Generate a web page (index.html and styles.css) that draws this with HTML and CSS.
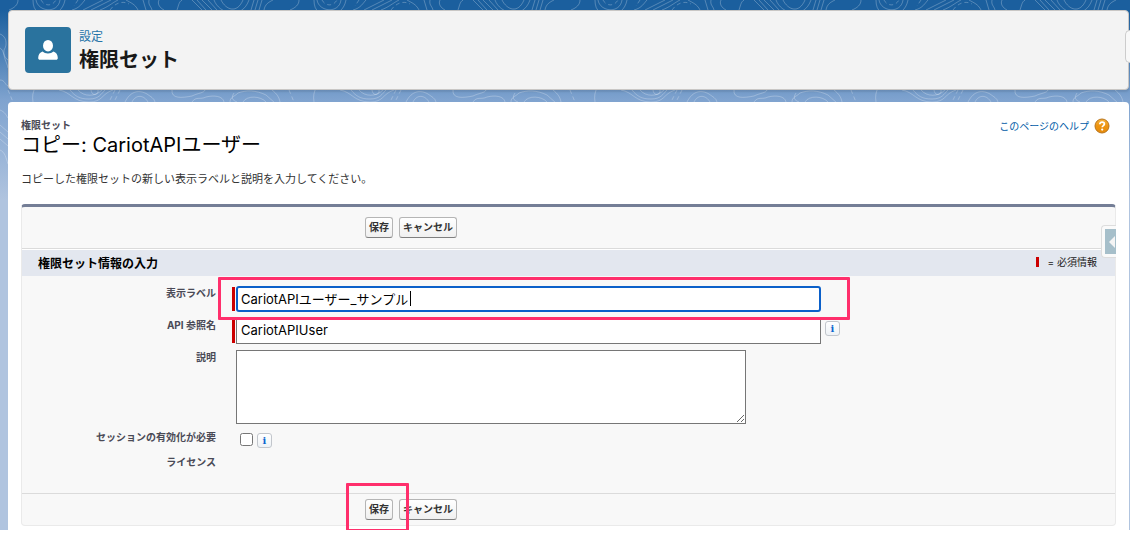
FILE: index.html
```html
<!DOCTYPE html>
<html lang="ja">
<head>
  <meta charset="UTF-8" />
  <meta name="viewport" content="width=device-width, initial-scale=1.0" />
  <title>権限セット</title>
  <link rel="stylesheet" href="styles.css">
</head>
<body>
  <div class="page">
    <svg class="contours" aria-hidden="true">
      <defs>
        <pattern id="topo" width="281" height="200" patternUnits="userSpaceOnUse" x="300">
          <g fill="none" stroke="#fff" stroke-opacity="0.25">
            <path d="M14 0c0 12 6 14 18 16M17 0c2 12 22 14 24 0M46 0c-1 5-3 8-5 10M53 10c8-2 10-7 13-10M64 10l20-10M72 10L92 0M81 10c8-3 12-7 18-10M107 0c5 3 9 4 12 10M124 0l3 10M130 0c-1 5 2 6 3 10M140 0c-2 4 1 8 5 10M158 10c2-6 2-8 5-10M173 0l10 10M178 0l9 10M183 0l10 10M189 0l9 10M202 0c5 10 16 14 22 0M195 0c5 14 28 20 35 0M235 0l-3 10M239 0l-3 10M243 0l-3 10M245 10c1-6 5-8 9-10M280 0c0 5-4 8-9 10" />
            <path d="M22 0c3 6 11 7 15 0M59 0l-4 6M91 10c4-6 12-10 19-6" stroke-dasharray="4 3" />
            <path d="M14 102c-1-6 0-10 2-14M40 90c12 2 14 12 30 12 14 0 12-8 24-12M51 90c5 6 9 9 19 9 10 0 12-5 16-9M59 90c6 7 17 7 24 0M72 90c1 7 8 5 7 0M106 102c6-12 15-12 22-8 4 3 7 4 8 8M113 102c4-8 12-7 16 0M153 90c-1 9 10 8 20 6 6-3 12-3 13-6M173 102c4-6 8-2 14-5 8-2 17-1 18 5M211 102c0-5 4-5 8-9 8-3 18-3 28 2l9 8M224 102c4-7 18-6 23 0M215 93c-3 5-2 7 3 9M253 90c5 4 7 7 8 12" />
            <path d="M96 90l-6 12M101 90l-6 12M270 90l5 12" stroke-dasharray="4 3" />
          </g>
        </pattern>
      </defs>
      <rect width="100%" height="102" fill="url(#topo)" />
      <g fill="none" stroke="#fff" stroke-opacity="0.25">
        <path d="M0 34c6 2 8 10 4 16-1 8 3 12 4 18M0 48c4 2 3 9 8 12M0 80c5 0 5 5 8 6M0 110c5 2 6 5 8 8M0 125l8 7M0 132l8 7M0 139l8 7M0 150c5 2 6 8 8 14" />
      </g>
    </svg>

    <header class="page-header">
      <span class="header-icon">
        <svg viewBox="0 0 46 46" width="46" height="46" aria-hidden="true">
          <ellipse cx="23" cy="18.700" rx="5" ry="5.800" fill="#fff" />
          <path fill="#fff" d="M17.500 24.500c-2.600 1-4.300 3-4.300 6.500 0 1.200.6 1.800 1.800 1.800h16c1.200 0 1.800-.6 1.800-1.800 0-3.500-1.700-5.500-4.300-6.500-1.500 1.300-3.200 2-5.500 2s-4-.7-5.500-2z" />
        </svg>
      </span>
      <div>
        <div class="header-parent">設定</div>
        <h1>権限セット</h1>
      </div>
      <span class="header-tab"></span>
    </header>

    <main class="content">
      <div class="title-row">
        <div>
          <div class="subtitle">権限セット</div>
          <h2>コピー: CariotAPIユーザー</h2>
        </div>
        <a class="help" href="#">
          このページのヘルプ
          <svg viewBox="0 0 16 16" width="16" height="16" aria-hidden="true">
            <defs>
              <linearGradient id="orange" x2="0" y2="1">
                <stop offset="0" stop-color="#f5b23c" />
                <stop offset="0.5" stop-color="#ee9410" />
                <stop offset="1" stop-color="#e58a0a" />
              </linearGradient>
            </defs>
            <circle cx="8" cy="8" r="7" fill="url(#orange)" stroke="#b8741c" />
            <path d="M5.800 6.300c0-3 4.600-2.700 4.600-.2 0 1.500-2.200 1.600-2.200 3.200" fill="none" stroke="#fff" stroke-width="1.700" />
            <circle cx="8.200" cy="11.600" r="1.100" fill="#fff" />
          </svg>
        </a>
      </div>
      <p class="description">コピーした権限セットの新しい表示ラベルと説明を入力してください。</p>

      <form class="edit-form">
        <div class="button-row top">
          <div class="buttons">
            <button type="button">保存</button>
            <button type="button">キャンセル</button>
          </div>
        </div>

        <div class="section-head">
          <h3>権限セット情報の入力</h3>
          <div class="legend"><span class="legend-mark"></span>= 必須情報</div>
        </div>

        <div class="fields">
          <label for="label">表示ラベル</label>
          <div class="field required">
            <input type="text" class="text active" id="label" value="CariotAPIユーザー_サンプル">
            <span class="caret"></span>
            <span class="highlight highlight-field"></span>
          </div>

          <label for="api-name">API 参照名</label>
          <div class="field required">
            <input type="text" class="text" id="api-name" value="CariotAPIUser">
            <button type="button" class="info" aria-label="情報">i</button>
          </div>

          <label for="description">説明</label>
          <div class="field">
            <textarea id="description"></textarea>
          </div>

          <label for="session">セッションの有効化が必要</label>
          <div class="field check">
            <input type="checkbox" id="session">
            <button type="button" class="info" aria-label="情報">i</button>
          </div>

          <span class="field-name">ライセンス</span>
          <div class="field"></div>
        </div>

        <div class="button-row bottom">
          <div class="buttons">
            <button type="button">保存</button>
            <button type="button">キャンセル</button>
            <span class="highlight highlight-save"></span>
          </div>
        </div>

        <button type="button" class="side-tab" aria-label="サイドバーを開く">
          <svg viewBox="0 0 11 25" width="11" height="25" aria-hidden="true">
            <rect width="11" height="25" fill="#a6bfca" />
            <path d="M10 7v12l-6-6z" fill="#f4f4f4" />
          </svg>
        </button>
      </form>
    </main>
  </div>
</body>
</html>
```

FILE: styles.css
```css
:root {
  --latin: Inter;
  --label: #4a4a56;
  --link: #015ba7;
  --pink: #ff2f6c;
  --red: #c00;
}

* {
  box-sizing: border-box;
}

body {
  margin: 0;
  background: #fff;
  color: #222;
  font-family: var(--latin), "Noto Sans CJK JP", sans-serif;
  font-size: 10px;
}

h1, h2, h3, p {
  margin: 0;
}

button, input, textarea {
  font-family: inherit;
}

.page {
  position: relative;
  padding: 10px 1px 0 8px;
  background: linear-gradient(to bottom, #1b5f9e 10px, #7fa3cf 100px, #b0c4df 200px);
}

.contours {
  position: absolute;
  top: 0;
  left: 0;
  width: 100%;
  height: 200px;
}

.page-header {
  position: relative;
  display: flex;
  align-items: center;
  gap: 8px;
  height: 80px;
  margin-bottom: 12px;
  padding: 0 16px;
  background: #f3f3f3;
  border: 1px solid #c9c7c5;
  border-radius: 4px;
  box-shadow: 0 2px 2px rgba(0, 0, 0, 0.1);
}

.header-icon {
  width: 46px;
  height: 46px;
  background: #2a739e;
  border-radius: 4px;
}

.header-parent {
  padding-top: 2px;
  color: #2574a9;
  font-size: 12px;
  line-height: 18px;
}

h1 {
  color: #181818;
  font-size: 20px;
  line-height: 28px;
}

.header-tab {
  position: absolute;
  top: 19px;
  right: -2px;
  width: 5px;
  height: 33px;
  background: #f8f8f8;
  border: 1px solid #ccc;
  border-right: 0;
  border-radius: 5px 0 0 5px;
}

.content {
  position: relative;
  padding: 16px 13px 4px;
  background: #fff;
  border-radius: 4px 4px 0 0;
}

.title-row {
  display: flex;
  justify-content: space-between;
  align-items: flex-start;
}

.subtitle {
  color: var(--label);
  font-weight: bold;
  line-height: 14px;
}

h2 {
  color: #000;
  font-size: 20px;
  font-weight: normal;
  line-height: 26px;
}

.help {
  display: flex;
  align-items: center;
  gap: 5px;
  padding-right: 6px;
  color: var(--link);
  line-height: 16px;
  text-decoration: none;
}

.description {
  margin: 13px 0 17px;
  color: #333;
  font-size: 11px;
  line-height: 16px;
}

.edit-form {
  position: relative;
  background: #f8f8f8;
  border: 1px solid #eaeaea;
  border-top: 3px solid #747e96;
  border-radius: 4px;
}

.button-row {
  padding-left: 343px;
}

.button-row.top {
  padding-top: 10px;
  padding-bottom: 10px;
  border-bottom: 1px solid #dbdbdb;
}

.button-row.bottom {
  padding-top: 5px;
  padding-bottom: 5px;
  border-top: 1px solid #dbdbdb;
}

.buttons {
  position: relative;
  display: flex;
  gap: 6px;
}

.buttons button {
  height: 21px;
  padding: 0 3px 1px;
  background: linear-gradient(#fff, #f0f0f0);
  border: 1px solid #b5b5b5;
  border-bottom-color: #7f7f7f;
  border-radius: 3px;
  color: #333;
  font-size: 10px;
  font-weight: bold;
  line-height: 16px;
}

.section-head {
  display: flex;
  justify-content: space-between;
  align-items: center;
  height: 27px;
  padding: 0 18px 0 16px;
  background: #e3e7ef;
  border-top: 1px solid #fff;
}

h3 {
  padding-top: 2px;
  color: #000;
  font-size: 12px;
  line-height: 18px;
}

.legend {
  display: flex;
  align-items: center;
  gap: 9px;
  padding-bottom: 3px;
  line-height: 14px;
}

.legend-mark {
  width: 3px;
  height: 10px;
  background: var(--red);
}

.fields {
  display: grid;
  grid-template-columns: 194px 1fr;
  column-gap: 16px;
  row-gap: 6px;
  padding: 10px 0 24px;
}

.fields label,
.field-name {
  color: var(--label);
  font-weight: bold;
  line-height: 14px;
  text-align: right;
}

.field {
  position: relative;
  display: flex;
  align-items: center;
  gap: 4px;
  padding-left: 4px;
}

.required::before {
  content: "";
  position: absolute;
  top: 1px;
  bottom: 1px;
  left: 0;
  width: 3px;
  background: var(--red);
}

.text {
  width: 585px;
  height: 26px;
  padding: 0 4px 2px;
  background: #fff;
  border: 1px solid #767676;
  color: #000;
  font-size: 13px;
}

.text.active {
  padding: 0 3px 2px;
  border: 2px solid #0b60c9;
  border-radius: 3px;
  outline: none;
}

.caret {
  position: absolute;
  top: 5px;
  left: 178px;
  width: 1px;
  height: 15px;
  background: #000;
}

textarea {
  display: block;
  width: 510px;
  height: 74px;
  background: #fff;
  border: 1px solid #767676;
}

.check {
  height: 19px;
  padding-left: 8px;
}

.check input {
  width: 13px;
  height: 13px;
  margin: 0;
}

.info {
  align-self: flex-start;
  width: 15px;
  height: 15px;
  margin: 3px 0 0;
  padding: 0;
  background: linear-gradient(#fff, #eef2f6);
  border: 1px solid #c2c6cc;
  border-radius: 3px;
  color: #0b66d0;
  font-family: "DejaVu Serif", serif;
  font-size: 10px;
  font-weight: bold;
  line-height: 12px;
}

.highlight {
  position: absolute;
  border: 3px solid var(--pink);
  border-radius: 1px;
  pointer-events: none;
}

.highlight-field {
  top: -9px;
  left: -14px;
  width: 632px;
  height: 43px;
  z-index: 1;
}

.highlight-save {
  top: -16px;
  left: -19px;
  width: 63px;
  height: 49px;
}

.side-tab {
  position: absolute;
  top: 18px;
  right: -1px;
  width: 15px;
  height: 33px;
  padding: 3px 0 3px 3px;
  background: #fafafa;
  border: 1px solid #ddd;
  border-right: 0;
  border-radius: 4px 0 0 4px;
}

.side-tab svg {
  display: block;
}
```
